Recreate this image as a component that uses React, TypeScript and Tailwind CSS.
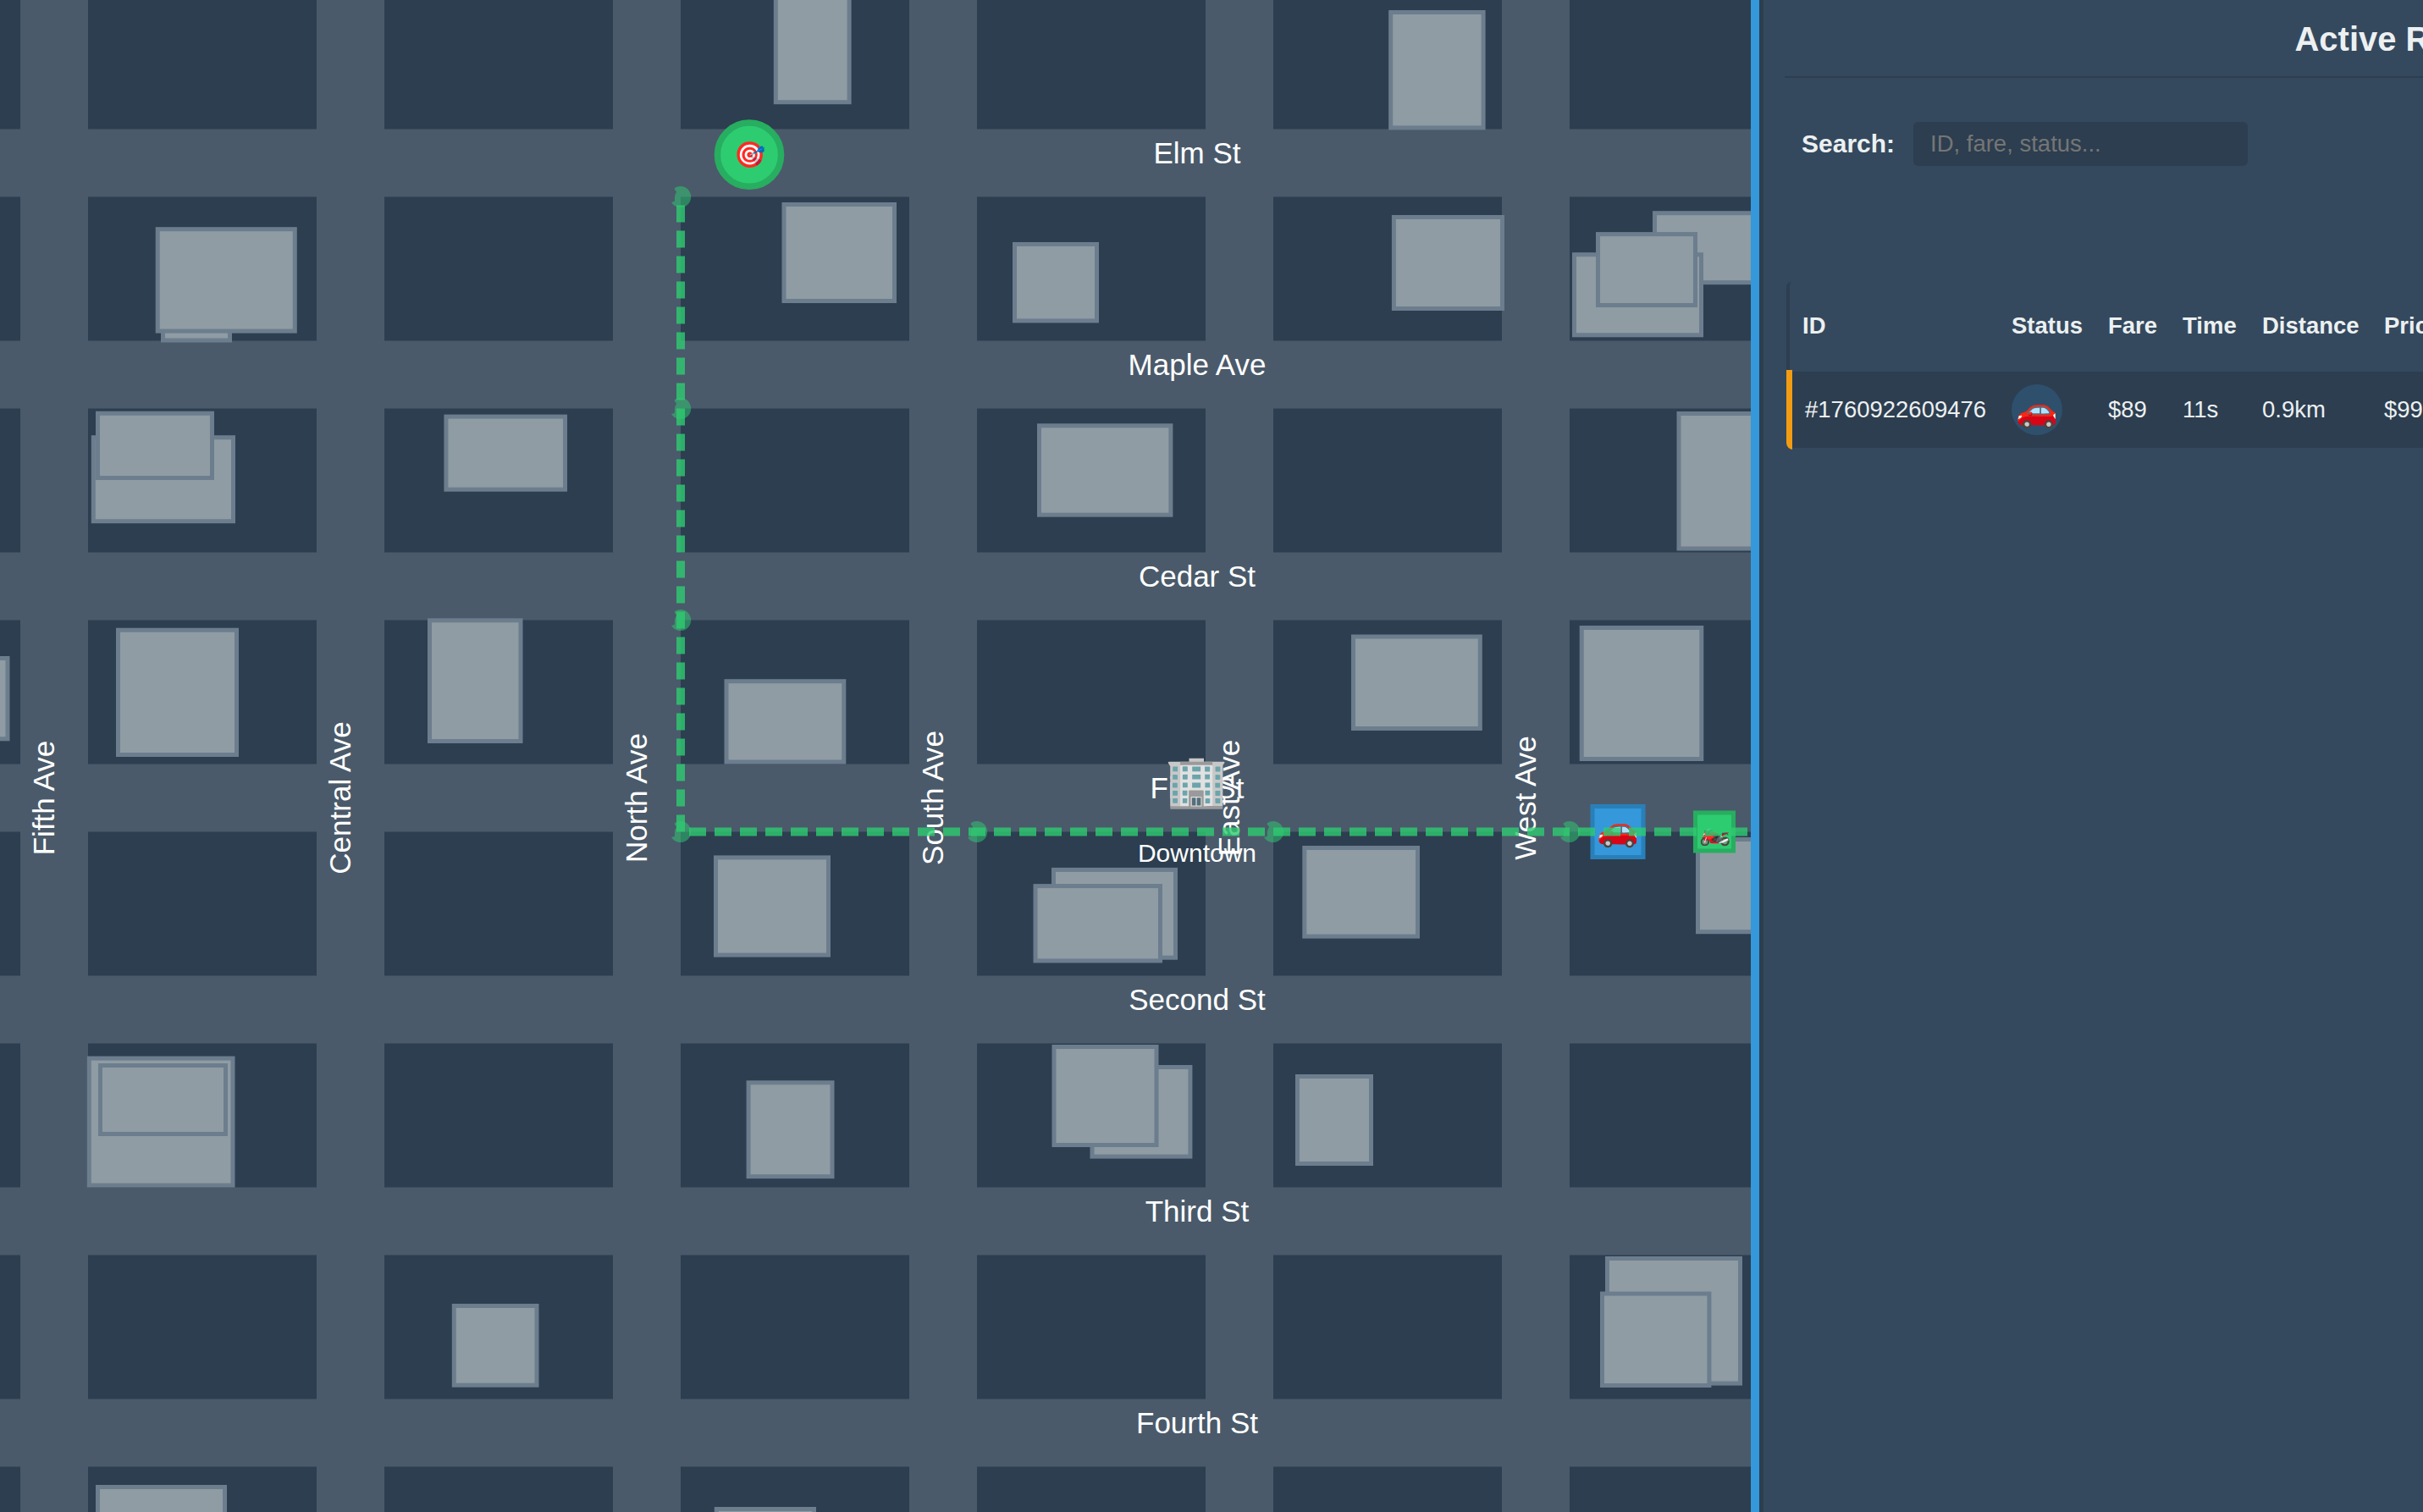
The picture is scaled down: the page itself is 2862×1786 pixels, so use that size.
import React from "react";

type Box = [left: number, top: number, right: number, bottom: number];

const AVENUES = [
  { x: 24, name: "Fifth Ave" },
  { x: 374, name: "Central Ave" },
  { x: 724, name: "North Ave" },
  { x: 1074, name: "South Ave" },
  { x: 1424, name: "East Ave" },
  { x: 1774, name: "West Ave" },
];

const STREETS = [
  { y: 152.5, name: "Elm St" },
  { y: 402.5, name: "Maple Ave" },
  { y: 652.5, name: "Cedar St" },
  { y: 902.5, name: "First St" },
  { y: 1152.5, name: "Second St" },
  { y: 1402.5, name: "Third St" },
  { y: 1652.5, name: "Fourth St" },
];

const BUILDINGS: Box[] = [
  [190, 340, 274, 404.5],
  [183.7, 268.2, 350.8, 393.6],
  [107.8, 514.2, 278, 618.2],
  [113, 485.7, 253, 567],
  [524.4, 489.6, 670, 580.7],
  [913.8, -40, 1005.6, 123.2],
  [923.5, 239, 1059, 358],
  [1196, 286, 1298, 381.4],
  [1225, 500.3, 1385.4, 610.7],
  [1640.2, 12, 1754.6, 153.4],
  [1643.9, 254, 1777, 367],
  [1952, 249.2, 2120, 336.2],
  [1857, 298.2, 2012, 398.3],
  [1885, 274.1, 2005, 363],
  [1980.5, 486, 2140, 650.5],
  [-80, 775, 11.5, 875.3],
  [137, 741.7, 282, 894],
  [505, 730.3, 617.5, 878],
  [855.5, 802.2, 999.3, 902.5],
  [843, 1010.4, 981, 1130.6],
  [1242, 1024.9, 1391, 1133.7],
  [1220.5, 1044.1, 1373, 1137.4],
  [1596, 749.5, 1750.8, 863],
  [1865.7, 739, 2012.3, 899],
  [1538.3, 999, 1677, 1108.6],
  [2003, 989, 2140, 1103.2],
  [102.8, 1247.6, 277.5, 1402.6],
  [116, 1256, 269, 1342],
  [533.8, 1540, 636.5, 1638.7],
  [113, 1754, 268, 1830],
  [881.6, 1276.3, 985.5, 1392.2],
  [1287.5, 1258, 1408.4, 1368.6],
  [1242.5, 1234, 1368.5, 1355],
  [843.8, 1780, 964, 1850],
  [1530, 1269, 1622, 1377],
  [1896, 1484, 2058, 1636.6],
  [1890, 1525.6, 2021.4, 1639],
];

const WAYPOINTS: [number, number][] = [
  [804, 232.5],
  [804, 482.5],
  [804, 732.5],
  [804, 982.5],
  [1154, 982.5],
  [1504, 982.5],
  [1854, 982.5],
];

function CityMap() {
  return (
    <svg
      className="block h-full w-[2068px] shrink-0 bg-[#2c3e50] font-['Liberation_Sans',Arial,sans-serif]"
      viewBox="0 0 2068 1786"
      width={2068}
      height={1786}
    >
      {STREETS.map((s) => (
        <rect key={s.name} x={0} y={s.y} width={2068} height={80} fill="#4a5a6a" />
      ))}
      {AVENUES.map((a) => (
        <rect key={a.name} x={a.x} y={0} width={80} height={1786} fill="#4a5a6a" />
      ))}

      {BUILDINGS.map(([l, t, r, b], i) => (
        <rect
          key={i}
          x={l + 2.5}
          y={t + 2.5}
          width={r - l - 5}
          height={b - t - 5}
          fill="#8f9ca3"
          stroke="#6c7d8e"
          strokeWidth={5}
        />
      ))}

      <g fill="#ffffff" textAnchor="middle" fontSize={35}>
        {STREETS.map((s) => (
          <text key={s.name} x={1414} y={s.y + 40}>
            {s.name}
          </text>
        ))}
        {AVENUES.map((a) => (
          <text key={a.name} transform={`translate(${a.x + 40} 942.5) rotate(-90)`}>
            {a.name}
          </text>
        ))}
      </g>

      <g textAnchor="middle">
        <text x={1413.5} y={942.5} fontSize={60}>
          🏢
        </text>
        <text x={1414} y={1017.5} fontSize={30} fill="#ffffff">
          Downtown
        </text>
      </g>

      <circle cx={885} cy={182.7} r={37.6} fill="#2ecc71" stroke="#27ae60" strokeWidth={7.5} />
      <text x={885} y={193} fontSize={30} textAnchor="middle">
        🎯
      </text>

      <rect x={1881} y={952.5} width={60} height={60} fill="#3498db" stroke="#2980b9" strokeWidth={5} />
      <text x={1911} y={992.5} fontSize={40} textAnchor="middle">
        🚗
      </text>
      <rect x={2002.5} y={960} width={45} height={45} fill="#2ecc71" stroke="#27ae60" strokeWidth={5} />
      <text x={2025} y={992.5} fontSize={30} textAnchor="middle">
        🏍️
      </text>

      {WAYPOINTS.map(([x, y]) => (
        <path
          key={`${x}-${y}`}
          transform={`translate(${x} ${y})`}
          d="M-7 -10.5A12.5 12.5 0 1 1 -11 6.5C-8.5 6 -7 5.5 -7 4C-7.3 1 -7.3 -2 -5 -5.500C-5.500 -8 -8 -7.500 -7 -10.500Z"
          fill="#2ecc71"
          fillOpacity={0.5}
        />
      ))}
      <path
        d="M2094 982.5H804V232.5"
        fill="none"
        stroke="#2ecc71"
        strokeOpacity={0.8}
        strokeWidth={10}
        strokeDasharray="20 10"
      />
    </svg>
  );
}

const RIDE_COLUMNS = ["ID", "Status", "Fare", "Time", "Distance", "Price"];

function RidesPanel() {
  return (
    <aside className="h-full min-w-0 flex-1 overflow-hidden border-l-[5px] border-[#2c3e50] bg-[#34495e] pl-[25px] text-[#ecf0f1]">
      <div className="w-[1445px]">
        <h2 className="h-[92px] border-b-2 border-[#2c3e50] pt-[23px] text-center text-[40px] leading-[46px] font-bold">
          Active Rides
        </h2>

        <div className="mt-[52px] flex h-[52px] items-center pl-5">
          <label className="w-[132px] pb-px text-[30px] leading-[34px] font-bold">Search:</label>
          <input
            className="h-[52px] w-[395px] rounded-[6px] bg-[#2c3e50] px-5 text-[27.5px] placeholder:text-[#757575]"
            placeholder="ID, fare, status..."
          />
        </div>

        <div className="mt-[137px] ml-0.5">
          <div className="grid h-[104px] grid-cols-[247px_114px_88px_94px_144px_200px] items-center rounded-tl-[6px] border-l-4 border-[#2c3e50] pl-[15px] text-[27.5px] leading-8 font-bold">
            {RIDE_COLUMNS.map((name) => (
              <span key={name}>{name}</span>
            ))}
          </div>
          <div className="h-[94px] rounded-bl-[8px] border-l-[7px] border-[#f39c12]">
            <div className="grid h-full grid-cols-[244px_114px_88px_94px_144px_200px] items-center border-t-2 border-b-2 border-[#34495e] bg-[#2c3e50] pl-[15px] text-[27.5px] leading-8">
              <span>#1760922609476</span>
              <span className="flex size-[60px] items-center justify-center rounded-full bg-[#2e506c]">
                <span className="text-[40px] leading-[46px]">🚗</span>
              </span>
              <span>$89</span>
              <span>11s</span>
              <span>0.9km</span>
              <span>$99</span>
            </div>
          </div>
        </div>
      </div>
    </aside>
  );
}

export default function App() {
  return (
    <main className="flex h-[1786px] w-full overflow-hidden bg-[#34495e] font-['Liberation_Sans',Arial,sans-serif]">
      <CityMap />
      <div className="w-[10px] shrink-0 bg-[#3498db]" />
      <RidesPanel />
    </main>
  );
}
